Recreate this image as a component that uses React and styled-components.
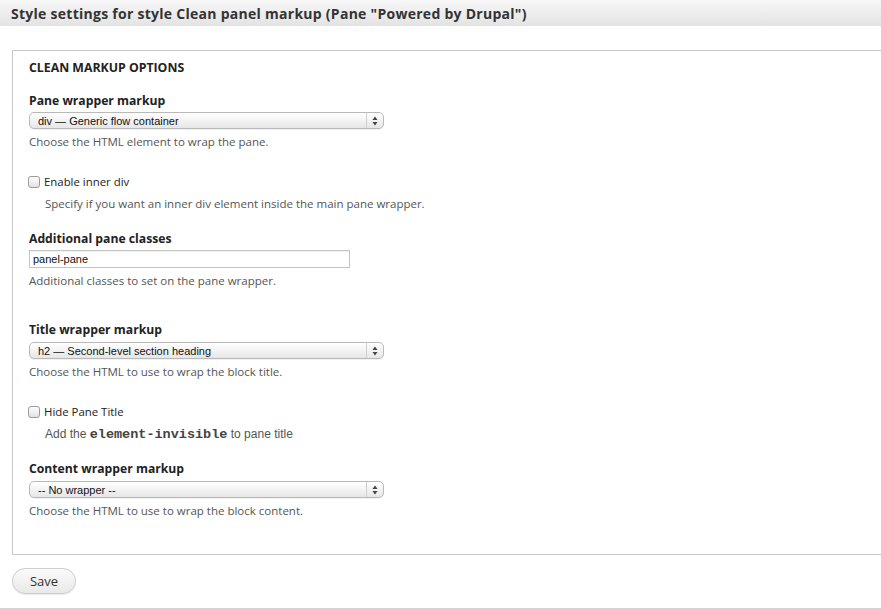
import React from 'react';
import styled, { createGlobalStyle } from 'styled-components';

const GlobalStyle = createGlobalStyle`
  html, body {
    margin: 0;
    padding: 0;
    background: #fff;
    overflow: hidden;
  }
  body {
    font-family: "Open Sans", "DejaVu Sans", sans-serif;
    color: #222;
  }
`;

const Modal = styled.div`
  width: 881px;
  height: 610px;
  box-sizing: border-box;
  border-bottom: 2px solid #d4d4d4;
  overflow: hidden;
`;

const TitleBar = styled.div`
  height: 26px;
  padding-left: 11px;
  display: flex;
  align-items: center;
  background: linear-gradient(#f7f7f7, #e3e3e3);
  font-size: 14px;
  font-weight: 700;
  color: #333;
  letter-spacing: 0.27px;
`;

const Body = styled.div`
  padding: 24px 0 0 12px;
`;

const Fieldset = styled.fieldset`
  width: 900px;
  height: 505px;
  box-sizing: border-box;
  margin: 0;
  padding: 8px 16px 0 16px;
  border: 1px solid #c9c9c9;
  border-right: none;
`;

const Legend = styled.div`
  font-size: 12.3px;
  font-weight: 700;
  text-transform: uppercase;
  color: #222;
  margin-bottom: 16px;
`;

const Item = styled.div`
  margin-bottom: ${p => p.$gap || 20}px;
`;

const Label = styled.div`
  font-size: 12.2px;
  font-weight: 700;
  color: #222;
  line-height: 18px;
  margin-bottom: ${p => p.$below || 2}px;
`;

const Description = styled.div`
  font-size: 11.5px;
  color: #555;
  line-height: 16px;
  margin-top: ${p => p.$top || 5}px;
  padding-left: ${p => (p.$indent ? 16 : 0)}px;
`;

const SelectWrap = styled.div`
  position: relative;
  width: 355px;
  height: 17px;
  box-sizing: border-box;
  border: 1px solid #b9b9b9;
  border-radius: 5px;
  background: linear-gradient(#ffffff, #f3f3f3 50%, #e6e6e6);
  box-shadow: inset 0 1px 0 #fff, 0 1px 0 rgba(0,0,0,0.05);
  font-family: "Liberation Sans", Arial, sans-serif;
  font-size: 11px;
  color: #111;
  display: flex;
  align-items: center;
  padding-left: 8px;
`;

const Arrows = styled.div`
  position: absolute;
  right: 0;
  top: 0;
  bottom: 0;
  width: 16px;
  border-left: 1px solid #cfcfcf;
  display: flex;
  align-items: center;
  justify-content: center;
`;

const TextInput = styled.div`
  width: 321px;
  height: 18px;
  box-sizing: border-box;
  border: 1px solid #c4c4c4;
  box-shadow: inset 0 1px 1px rgba(0,0,0,0.06);
  font-family: "Liberation Sans", Arial, sans-serif;
  font-size: 11px;
  color: #111;
  display: flex;
  align-items: center;
  padding-left: 3px;
`;

const CheckRow = styled.label`
  display: flex;
  align-items: center;
  gap: 4px;
  margin-left: -1px;
  font-size: 11.4px;
  color: #222;
  line-height: 16px;
`;

const Box = styled.span`
  width: 12px;
  height: 12px;
  box-sizing: border-box;
  border: 1px solid #9a9a9a;
  border-radius: 3px;
  background: linear-gradient(#fdfdfd, #e2e2e2);
  box-shadow: inset 0 1px 1px rgba(255,255,255,0.8);
`;

const Code = styled.code`
  font-family: "Liberation Mono", "Courier New", monospace;
  font-size: 13.5px;
  font-weight: 700;
  color: #444;
`;

const Plain = styled.span`
  font-family: "Liberation Sans", Arial, sans-serif;
  font-size: 12px;
`;

const SaveButton = styled.button`
  margin: 13px 0 0 0;
  width: 64px;
  height: 26px;
  border: 1px solid #cdcdcd;
  border-radius: 13px;
  background: linear-gradient(#fbfbfb, #e9e9e9);
  box-shadow: 0 1px 1px rgba(0,0,0,0.08);
  font-family: "Open Sans", "DejaVu Sans", sans-serif;
  font-size: 13px;
  color: #333;
  padding: 0;
`;

const ArrowIcon = () => (
  <svg width="6" height="10" viewBox="0 0 6 10">
    <path d="M3 0.5 L5.5 4 H0.5 Z" fill="#444" />
    <path d="M3 9.5 L5.5 6 H0.5 Z" fill="#444" />
  </svg>
);

const Select = ({ value }) => (
  <SelectWrap>
    {value}
    <Arrows>
      <ArrowIcon />
    </Arrows>
  </SelectWrap>
);

const Checkbox = ({ label }) => (
  <CheckRow>
    <Box />
    {label}
  </CheckRow>
);

export default function App() {
  return (
    <Modal>
      <GlobalStyle />
      <TitleBar>Style settings for style Clean panel markup (Pane "Powered by Drupal")</TitleBar>
      <Body>
        <Fieldset>
          <Legend>Clean markup options</Legend>

          <Item $gap={24}>
            <Label>Pane wrapper markup</Label>
            <Select value="div — Generic flow container" />
            <Description>Choose the HTML element to wrap the pane.</Description>
          </Item>

          <Item $gap={18}>
            <Checkbox label="Enable inner div" />
            <Description $indent $top={6}>Specify if you want an inner div element inside the main pane wrapper.</Description>
          </Item>

          <Item $gap={32}>
            <Label>Additional pane classes</Label>
            <TextInput>panel-pane</TextInput>
            <Description $top={5}>Additional classes to set on the pane wrapper.</Description>
          </Item>

          <Item $gap={24}>
            <Label $below={3}>Title wrapper markup</Label>
            <Select value="h2 — Second-level section heading" />
            <Description>Choose the HTML to use to wrap the block title.</Description>
          </Item>

          <Item $gap={17}>
            <Checkbox label="Hide Pane Title" />
            <Description $indent $top={6}>
              <Plain>Add the </Plain><Code>element-invisible</Code><Plain> to pane title</Plain>
            </Description>
          </Item>

          <Item>
            <Label $below={3}>Content wrapper markup</Label>
            <Select value="-- No wrapper --" />
            <Description>Choose the HTML to use to wrap the block content.</Description>
          </Item>
        </Fieldset>
        <SaveButton>Save</SaveButton>
      </Body>
    </Modal>
  );
}
